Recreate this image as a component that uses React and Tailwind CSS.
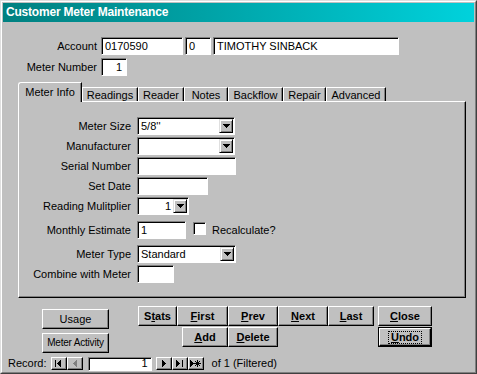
import React from "react";

const sunken =
  "bg-white border border-t-[#808080] border-l-[#808080] border-r-white border-b-white shadow-[inset_1px_1px_0_#000]";
const raised =
  "bg-[#c0c0c0] border border-t-white border-l-white border-r-black border-b-black shadow-[inset_-1px_-1px_0_#808080]";

function DownArrow() {
  return (
    <svg width="7" height="4" shapeRendering="crispEdges">
      <path d="M0 0h7v1h-1v1h-1v1h-1v1h-1v-1h-1v-1h-1v-1h-1z" fill="#000" />
    </svg>
  );
}

function DropBtn() {
  return (
    <div className="w-[14px] h-[14px] shrink-0 flex items-center justify-center bg-[#c0c0c0] border border-t-[#dfdfdf] border-l-[#dfdfdf] border-r-black border-b-black shadow-[inset_1px_1px_0_#fff,inset_-1px_-1px_0_#808080]">
      <DownArrow />
    </div>
  );
}

function Row({ label, children, className }) {
  return (
    <div className={"flex items-center " + className}>
      <div className="w-[113px] text-right pr-px leading-none whitespace-nowrap">{label}</div>
      <div className="ml-[5px] flex items-center h-full">{children}</div>
    </div>
  );
}

function Btn({ children, className }) {
  return (
    <div className={"flex items-center justify-center leading-none whitespace-nowrap " + raised + " " + className}>
      {children}
    </div>
  );
}

function NavBtn({ children }) {
  return (
    <div className={"w-[16px] h-[13px] flex items-center justify-center " + raised}>
      {children}
    </div>
  );
}

export default function App() {
  return (
    <div className="w-[477px] h-[374px] bg-[#c0c0c0] border border-t-[#dfdfdf] border-l-[#dfdfdf] border-r-[#404040] border-b-[#404040] font-['Liberation_Sans',Arial,sans-serif] text-[11px] text-black overflow-hidden">
      <div className="h-full border border-t-white border-l-white border-r-[#808080] border-b-[#808080] p-px flex flex-col">
        {/* Title bar */}
        <div className="h-[19px] shrink-0 bg-linear-to-r from-[#008080] to-[#00d2dc] text-white font-bold text-[12px] leading-[19px] pl-[3px] tracking-[-0.2px]">
          Customer Meter Maintenance
        </div>

        {/* Account row */}
        <div className="mt-[15px] flex items-center h-[18px]">
          <div className="w-[94px] text-right leading-none">Account</div>
          <div className={"ml-[4px] w-[82px] h-[18px] flex items-center pl-[3px] " + sunken}>0170590</div>
          <div className={"ml-[2px] w-[26px] h-[18px] flex items-center pl-[3px] " + sunken}>0</div>
          <div className={"ml-[2px] w-[186px] h-[18px] flex items-center pl-[3px] " + sunken}>TIMOTHY SINBACK</div>
        </div>

        {/* Meter Number row */}
        <div className="mt-[3px] flex items-center h-[18px]">
          <div className="w-[94px] text-right leading-none">Meter Number</div>
          <div className={"ml-[4px] w-[26px] h-[18px] flex items-center justify-end pr-[4px] " + sunken}>1</div>
        </div>

        {/* Tabs */}
        <div className="mt-[6px] ml-[15px] h-[19px] flex items-end">
          <div className="relative z-10 -mb-px w-[64px] h-[20px] bg-[#c0c0c0] border border-b-0 border-t-white border-l-white border-r-black rounded-tl-[3px] shadow-[inset_-1px_0_0_#808080] flex justify-center pt-[4px] leading-none">
            Meter Info
          </div>
          {[
            ["Readings", "w-[56px]"],
            ["Reader", "w-[46px]"],
            ["Notes", "w-[44px]"],
            ["Backflow", "w-[55px]"],
            ["Repair", "w-[43px]"],
            ["Advanced", "w-[60px]"],
          ].map(([t, w]) => (
            <div
              key={t}
              className={
                "h-[14px] border border-b-0 border-t-white border-l-white border-r-black shadow-[inset_-1px_0_0_#808080] flex items-center justify-center leading-none pt-px " +
                w
              }
            >
              {t}
            </div>
          ))}
        </div>

        {/* Panel */}
        <div className="ml-[15px] w-[448px] h-[197px] shrink-0 border border-t-white border-l-white border-r-black border-b-black shadow-[inset_-1px_-1px_0_#808080] pt-[15px] flex flex-col">
          <Row label="Meter Size" className="h-[18px]">
            <div className={"w-[98px] h-[18px] flex items-center pl-[3px] pr-px " + sunken}>
              <span className="flex-1 leading-none">5/8''</span>
              <DropBtn />
            </div>
          </Row>
          <Row label="Manufacturer" className="h-[18px] mt-[2px]">
            <div className={"w-[98px] h-[18px] flex items-center pl-[3px] pr-px " + sunken}>
              <span className="flex-1" />
              <DropBtn />
            </div>
          </Row>
          <Row label="Serial Number" className="h-[18px] mt-[2px]">
            <div className={"w-[99px] h-[18px] " + sunken} />
          </Row>
          <Row label="Set Date" className="h-[18px] mt-[2px]">
            <div className={"w-[71px] h-[18px] " + sunken} />
          </Row>
          <Row label="Reading Mulitplier" className="h-[18px] mt-[2px]">
            <div className={"w-[52px] h-[18px] flex items-center pl-[3px] pr-px " + sunken}>
              <span className="flex-1 text-right pr-[2px] leading-none">1</span>
              <DropBtn />
            </div>
          </Row>
          <Row label="Monthly Estimate" className="h-[18px] mt-[6px]">
            <div className={"w-[49px] h-[18px] flex items-center pl-[3px] " + sunken}>1</div>
            <div className={"ml-[7px] w-[13px] h-[13px] -mt-[4px] " + sunken} />
            <span className="ml-[6px] leading-none">Recalculate?</span>
          </Row>
          <Row label="Meter Type" className="h-[18px] mt-[6px]">
            <div className={"w-[99px] h-[18px] flex items-center pl-[3px] pr-px " + sunken}>
              <span className="flex-1 leading-none">Standard</span>
              <DropBtn />
            </div>
          </Row>
          <Row label="Combine with Meter" className="h-[18px] mt-[2px]">
            <div className={"w-[37px] h-[18px] " + sunken} />
          </Row>
        </div>

        {/* Bottom buttons */}
        <div className="h-[58px] shrink-0 flex items-start">
          <div className="ml-[39px] mt-[11px] flex flex-col">
            <Btn className="w-[67px] h-[20px]">Usage</Btn>
            <Btn className="w-[67px] h-[20px] mt-[4px] text-[10px] tracking-[-0.2px]">Meter Activity</Btn>
          </div>
          <div className="ml-[29px] mt-[8px] flex flex-col font-bold">
            <div className="flex">
              <Btn className="w-[39px] h-[20px]">S<u>t</u>ats</Btn>
              <Btn className="w-[51px] h-[20px]"><u>F</u>irst</Btn>
              <Btn className="w-[50px] h-[20px]"><u>P</u>rev</Btn>
              <Btn className="w-[50px] h-[20px]"><u>N</u>ext</Btn>
              <Btn className="w-[46px] h-[20px]"><u>L</u>ast</Btn>
            </div>
            <div className="flex ml-[44px] mt-px">
              <Btn className="w-[46px] h-[20px]"><u>A</u>dd</Btn>
              <Btn className="w-[50px] h-[20px]"><u>D</u>elete</Btn>
            </div>
          </div>
          <div className="ml-[4px] mt-[8px] flex flex-col font-bold">
            <Btn className="w-[54px] h-[20px]"><u>C</u>lose</Btn>
            <div className="mt-px w-[54px] h-[20px] border border-black">
              <Btn className="w-full h-full">
                <span className="border border-dotted border-black px-[2px] leading-[11px]"><u>U</u>ndo</span>
              </Btn>
            </div>
          </div>
        </div>

        {/* Record navigation */}
        <div className="flex items-center h-[13px] mt-px">
          <span className="ml-[5px] leading-none">Record:</span>
          <div className="ml-[4px] flex">
            <NavBtn>
              <svg width="7" height="7" shapeRendering="crispEdges">
                <path d="M0 0h1v7h-1z M5 0h1v7h-1v-1h-1v-1h-1v-1h-1v-1h1v-1h1v-1h1z" fill="#000" />
              </svg>
            </NavBtn>
            <NavBtn>
              <svg width="4" height="7" shapeRendering="crispEdges">
                <path d="M3 0h1v7h-1v-1h-1v-1h-1v-1h-1v-1h1v-1h1v-1h1z" fill="#808080" />
              </svg>
            </NavBtn>
          </div>
          <div className={"ml-[5px] w-[64px] h-[14px] flex items-center justify-end pr-[3px] leading-none " + sunken}>1</div>
          <div className="ml-[4px] flex">
            <NavBtn>
              <svg width="4" height="7" shapeRendering="crispEdges">
                <path d="M0 0h1v1h1v1h1v1h1v1h-1v1h-1v1h-1v1h-1z" fill="#000" />
              </svg>
            </NavBtn>
            <NavBtn>
              <svg width="7" height="7" shapeRendering="crispEdges">
                <path d="M0 0h1v1h1v1h1v1h1v1h-1v1h-1v1h-1v1h-1z M6 0h1v7h-1z" fill="#000" />
              </svg>
            </NavBtn>
            <NavBtn>
              <svg width="11" height="7" shapeRendering="crispEdges">
                <path d="M0 0h1v1h1v1h1v1h1v1h-1v1h-1v1h-1v1h-1z" fill="#000" />
                <path d="M7 0h1v2h1v-1h1v1h-1v1h2v1h-2v1h1v1h-1v-1h-1v2h-1v-2h-1v1h-1v-1h1v-1h-2v-1h2v-1h-1v-1h1v1h1z" fill="#000" />
              </svg>
            </NavBtn>
          </div>
          <span className="ml-[8px] leading-none">of 1 (Filtered)</span>
        </div>
      </div>
    </div>
  );
}
